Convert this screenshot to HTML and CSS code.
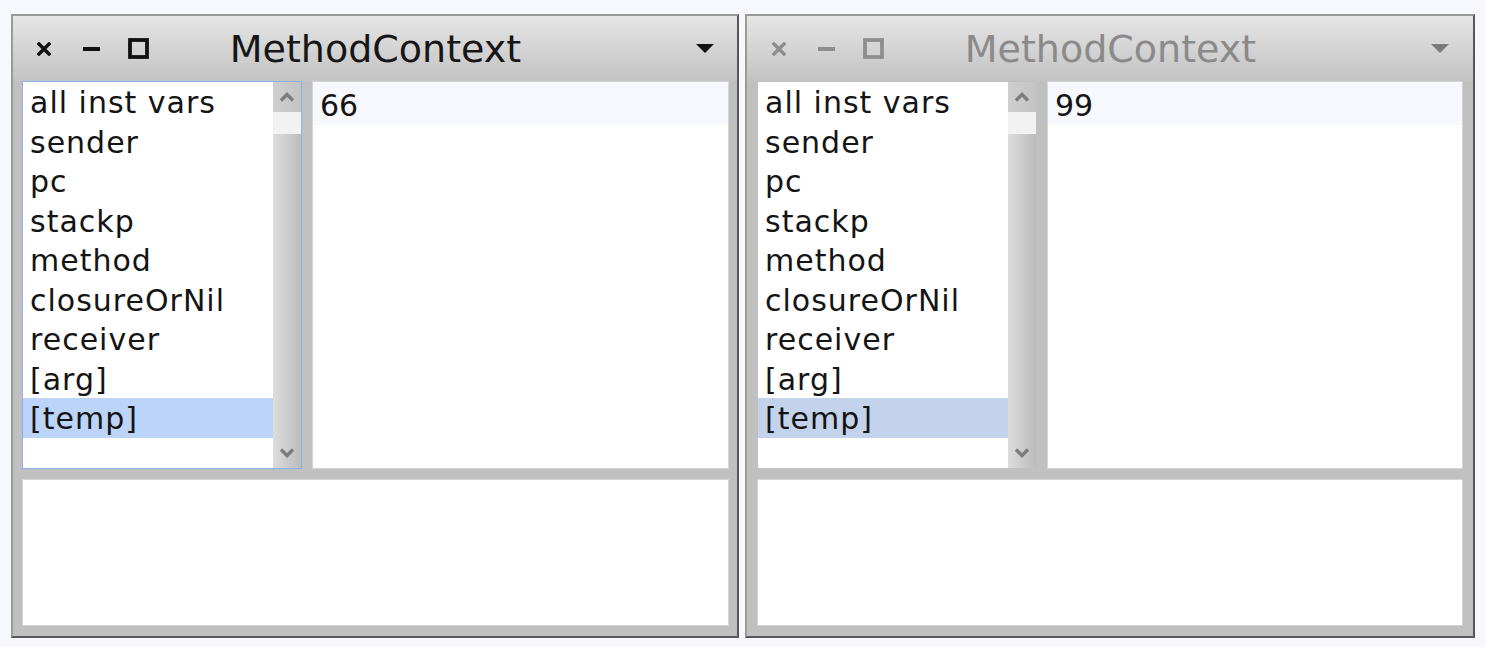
FILE: index.html
```html
<!DOCTYPE html>
<html>
<head>
<meta charset="utf-8">
<link rel="stylesheet" href="styles.css">
</head>
<body>
<div class="desk">
  <div class="window active">
    <div class="titlebar">
      <div class="buttons">
        <svg class="btn-close" width="14" height="14" viewBox="0 0 14 14"><path d="M2 2 L12 12 M12 2 L2 12" /></svg>
        <svg class="btn-min" width="17" height="4" viewBox="0 0 17 4"><rect x="0" y="0" width="17" height="4" /></svg>
        <svg class="btn-max" width="21" height="21" viewBox="0 0 21 21"><rect x="2" y="2" width="17" height="17" /></svg>
      </div>
      <div class="title">MethodContext</div>
      <svg class="menu" width="18" height="9" viewBox="0 0 18 9"><path d="M0 0 H18 L9 9 Z" /></svg>
    </div>
    <div class="upper">
      <div class="listpane">
        <ul class="list">
          <li>all inst vars</li>
          <li>sender</li>
          <li>pc</li>
          <li>stackp</li>
          <li>method</li>
          <li>closureOrNil</li>
          <li>receiver</li>
          <li>[arg]</li>
          <li class="sel">[temp]</li>
        </ul>
        <div class="scrollbar">
          <div class="sb-up"><svg width="16" height="10" viewBox="0 0 16 10"><path d="M2 8.5 L8 2.5 L14 8.5" /></svg></div>
          <div class="sb-thumb"></div>
          <div class="sb-track"></div>
          <div class="sb-down"><svg width="16" height="10" viewBox="0 0 16 10"><path d="M2 1.5 L8 7.5 L14 1.5" /></svg></div>
        </div>
      </div>
      <div class="textpane"><div class="line">66</div></div>
    </div>
    <div class="lower"></div>
  </div>

  <div class="window inactive">
    <div class="titlebar">
      <div class="buttons">
        <svg class="btn-close" width="14" height="14" viewBox="0 0 14 14"><path d="M2 2 L12 12 M12 2 L2 12" /></svg>
        <svg class="btn-min" width="17" height="4" viewBox="0 0 17 4"><rect x="0" y="0" width="17" height="4" /></svg>
        <svg class="btn-max" width="21" height="21" viewBox="0 0 21 21"><rect x="2" y="2" width="17" height="17" /></svg>
      </div>
      <div class="title">MethodContext</div>
      <svg class="menu" width="18" height="9" viewBox="0 0 18 9"><path d="M0 0 H18 L9 9 Z" /></svg>
    </div>
    <div class="upper">
      <div class="listpane">
        <ul class="list">
          <li>all inst vars</li>
          <li>sender</li>
          <li>pc</li>
          <li>stackp</li>
          <li>method</li>
          <li>closureOrNil</li>
          <li>receiver</li>
          <li>[arg]</li>
          <li class="sel">[temp]</li>
        </ul>
        <div class="scrollbar">
          <div class="sb-up"><svg width="16" height="10" viewBox="0 0 16 10"><path d="M2 8.5 L8 2.5 L14 8.5" /></svg></div>
          <div class="sb-thumb"></div>
          <div class="sb-track"></div>
          <div class="sb-down"><svg width="16" height="10" viewBox="0 0 16 10"><path d="M2 1.5 L8 7.5 L14 1.5" /></svg></div>
        </div>
      </div>
      <div class="textpane"><div class="line">99</div></div>
    </div>
    <div class="lower"></div>
  </div>
</div>
</body>
</html>
```

FILE: styles.css
```css
* { box-sizing: border-box; }

body {
  margin: 0;
  background: #f7f8fd;
  font-family: "DejaVu Sans", "Verdana", sans-serif;
}

.desk {
  display: flex;
  gap: 6px;
  padding: 14px 0 0 11px;
}

.window {
  width: 728px;
  height: 624px;
  border: 2px solid;
  border-color: #9a9a9a #575757 #575757 #9a9a9a;
  background: #c0c0c0;
  display: flex;
  flex-direction: column;
}

.window.inactive {
  width: 730px;
}

.titlebar {
  height: 65px;
  flex: none;
  display: grid;
  grid-template-columns: 1fr auto 1fr;
  align-items: center;
  background: linear-gradient(#e5e5e5, #c3c3c3);
  padding: 0 23px 0 24px;
}

.inactive .titlebar {
  padding: 0 24px 0 25px;
}

.buttons {
  display: flex;
  align-items: center;
}

.btn-close {
  fill: none;
  stroke: #111;
  stroke-width: 3.4;
  stroke-linecap: square;
}

.btn-min {
  margin-left: 32px;
  fill: #111;
}

.btn-max {
  margin-left: 28px;
  fill: none;
  stroke: #111;
  stroke-width: 3.8;
}

.inactive .btn-close { stroke: #8e8e8e; }
.inactive .btn-min { fill: #8e8e8e; }
.inactive .btn-max { stroke: #8e8e8e; }

.title {
  font-size: 38px;
  line-height: 38px;
  color: #161616;
  white-space: nowrap;
}

.inactive .title {
  color: #8a8a8a;
}

.menu {
  justify-self: end;
  fill: #111;
}

.inactive .menu {
  fill: #7a7a7a;
}

.upper {
  display: flex;
  gap: 10px;
  padding: 0 8px 0 9px;
  height: 388px;
  flex: none;
}

.inactive .upper {
  padding: 0 10px 0 10px;
}

.listpane {
  width: 280px;
  flex: none;
  display: flex;
  border: 1px solid transparent;
}

.active .listpane {
  border-color: #8cb1ee;
}

.list {
  width: 250px;
  margin: 0;
  padding: 0;
  list-style: none;
  background: #fff;
  font-size: 30px;
  letter-spacing: 1px;
  color: #141414;
}

.list li {
  height: 39.5px;
  line-height: 39.5px;
  padding: 1px 0 0 7px;
  white-space: nowrap;
}

.list li.sel {
  background: #bcd4f8;
}

.inactive .list li.sel {
  background: #c3d3ec;
}

.scrollbar {
  width: 28px;
  display: flex;
  flex-direction: column;
  background: linear-gradient(to right, #dddddd, #bcbcbc);
}

.sb-up, .sb-down {
  height: 30px;
  display: flex;
  justify-content: center;
  align-items: center;
  flex: none;
}

.sb-up {
  background: linear-gradient(to right, #cfcfcf, #c3c3c3);
}

.sb-up svg, .sb-down svg {
  fill: none;
  stroke: #7c7c7c;
  stroke-width: 3.4;
}

.sb-thumb {
  height: 22px;
  background: #f2f2f2;
  flex: none;
}

.sb-track {
  flex: 1;
}

.textpane {
  flex: 1;
  background: #fff;
  border: 1px solid #d4d4d4;
  font-size: 30px;
  color: #141414;
}

.textpane .line {
  height: 43px;
  padding: 5px 0 0 7px;
  line-height: 38px;
  background: #f6f8fd;
}

.lower {
  margin: 10px 8px 10px 9px;
  height: 147px;
  flex: none;
  background: #fff;
  border: 1px solid #d4d4d4;
}

.inactive .lower {
  margin: 10px 10px 10px 10px;
}
```
